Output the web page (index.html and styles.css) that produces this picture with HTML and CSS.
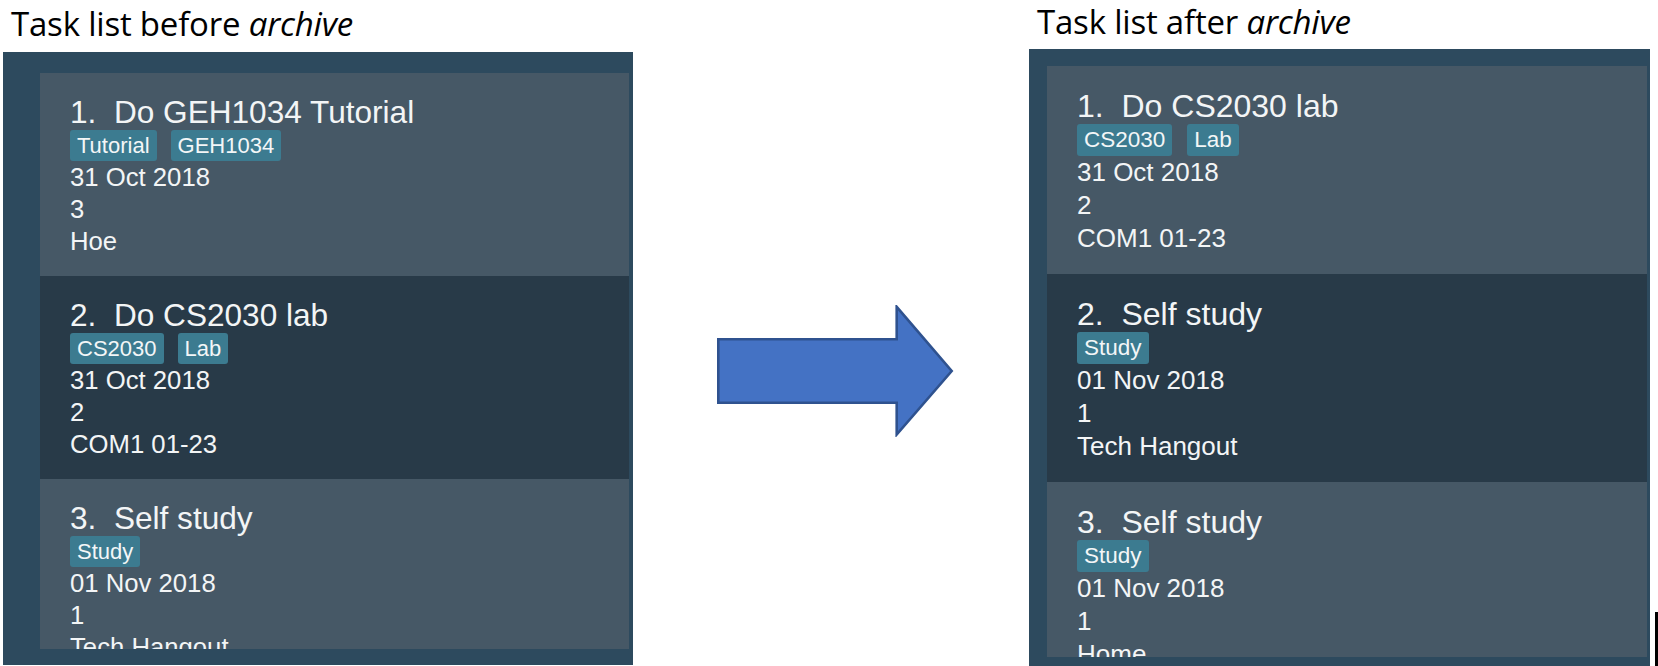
FILE: index.html
```html
<!DOCTYPE html>
<html lang="en">
<head>
<meta charset="utf-8">
<title>Task list archive</title>
<link rel="stylesheet" href="styles.css">
</head>
<body>
<div class="page">
  <section class="column column-before">
    <h2 class="heading">Task list before <em>archive</em></h2>
    <div class="panel">
      <div class="list">
        <div class="card card-light">
          <div class="card-title">1.&nbsp; Do GEH1034 Tutorial</div>
          <div class="tags"><span class="tag">Tutorial</span><span class="tag">GEH1034</span></div>
          <div class="detail">31 Oct 2018</div>
          <div class="detail">3</div>
          <div class="detail">Hoe</div>
        </div>
        <div class="card card-dark">
          <div class="card-title">2.&nbsp; Do CS2030 lab</div>
          <div class="tags"><span class="tag">CS2030</span><span class="tag">Lab</span></div>
          <div class="detail">31 Oct 2018</div>
          <div class="detail">2</div>
          <div class="detail">COM1 01-23</div>
        </div>
        <div class="card card-light">
          <div class="card-title">3.&nbsp; Self study</div>
          <div class="tags"><span class="tag">Study</span></div>
          <div class="detail">01 Nov 2018</div>
          <div class="detail">1</div>
          <div class="detail">Tech Hangout</div>
        </div>
      </div>
    </div>
  </section>

  <div class="arrow-area">
    <svg class="arrow" width="240" height="132" viewBox="0 0 240 132" aria-hidden="true">
      <polygon points="2.3,34.3 180.7,34.3 180.7,1.8 235.7,66 180.7,129.5 180.7,97.7 2.3,97.7" fill="#4472C4" stroke="#2F528F" stroke-width="2.6" stroke-linejoin="miter"/>
    </svg>
  </div>

  <section class="column column-after">
    <h2 class="heading">Task list after <em>archive</em></h2>
    <div class="panel">
      <div class="list">
        <div class="card card-light">
          <div class="card-title">1.&nbsp; Do CS2030 lab</div>
          <div class="tags"><span class="tag">CS2030</span><span class="tag">Lab</span></div>
          <div class="detail">31 Oct 2018</div>
          <div class="detail">2</div>
          <div class="detail">COM1 01-23</div>
        </div>
        <div class="card card-dark">
          <div class="card-title">2.&nbsp; Self study</div>
          <div class="tags"><span class="tag">Study</span></div>
          <div class="detail">01 Nov 2018</div>
          <div class="detail">1</div>
          <div class="detail">Tech Hangout</div>
        </div>
        <div class="card card-light">
          <div class="card-title">3.&nbsp; Self study</div>
          <div class="tags"><span class="tag">Study</span></div>
          <div class="detail">01 Nov 2018</div>
          <div class="detail">1</div>
          <div class="detail">Home</div>
        </div>
      </div>
    </div>
  </section>
  <div class="edge-mark"></div>
</div>
</body>
</html>
```

FILE: styles.css
```css
* {
  box-sizing: border-box;
}

html, body {
  margin: 0;
  padding: 0;
  background: #ffffff;
}

.page {
  position: relative;
  width: 1658px;
  height: 666px;
  display: flex;
  flex-direction: row;
  align-items: flex-start;
  overflow: hidden;
}

.column {
  display: flex;
  flex-direction: column;
}

.heading {
  margin: 0;
  font-family: "Open Sans", "Liberation Sans", sans-serif;
  font-weight: 400;
  font-size: 33px;
  line-height: 44px;
  color: #000000;
  padding-left: 8px;
  white-space: nowrap;
  letter-spacing: -0.2px;
}

.heading em {
  font-style: italic;
}

.column-before {
  width: 630px;
  margin-left: 3px;
  padding-top: 2px;
}

.column-before .heading {
  margin-bottom: 6px;
}

.column-after {
  width: 621px;
  padding-top: 0;
}

.column-after .heading {
  margin-bottom: 5px;
}

.panel {
  background: #2d4a5e;
}

.column-before .panel {
  height: 613px;
  padding: 21px 4px 16px 37px;
}

.column-after .panel {
  height: 617px;
  padding: 17px 3px 9px 18px;
}

.list {
  height: 100%;
  overflow: hidden;
  display: flex;
  flex-direction: column;
}

.card {
  flex: 0 0 auto;
  padding: 21px 20px 19px 30px;
  font-family: "Liberation Sans", Arial, sans-serif;
  color: #f3f5f6;
}

.column-after .card {
  padding-top: 22px;
  padding-bottom: 19px;
}

.card-light {
  background: #465866;
}

.card-dark {
  background: #283a48;
}

.card-title {
  font-size: 31.6px;
  line-height: 36px;
  white-space: nowrap;
}

.column-after .card-title {
  font-size: 32px;
}

.tags {
  display: flex;
  flex-direction: row;
  gap: 14px;
}

.column-after .tags {
  gap: 15px;
}

.tag {
  background: #3c7b90;
  color: #f3f6f7;
  font-size: 22px;
  line-height: 31px;
  height: 31px;
  padding: 0 7px;
  border-radius: 3px;
  white-space: nowrap;
}

.column-after .tag {
  font-size: 22.5px;
  height: 32px;
  line-height: 32px;
}

.detail {
  font-size: 25.7px;
  line-height: 32px;
  white-space: nowrap;
}

.column-after .detail {
  font-size: 26px;
  line-height: 33px;
}

.arrow-area {
  width: 396px;
  padding-top: 305px;
  padding-left: 83px;
}

.arrow {
  display: block;
}

.edge-mark {
  position: absolute;
  right: 0;
  top: 612px;
  width: 3px;
  height: 54px;
  background: #000000;
}
```
